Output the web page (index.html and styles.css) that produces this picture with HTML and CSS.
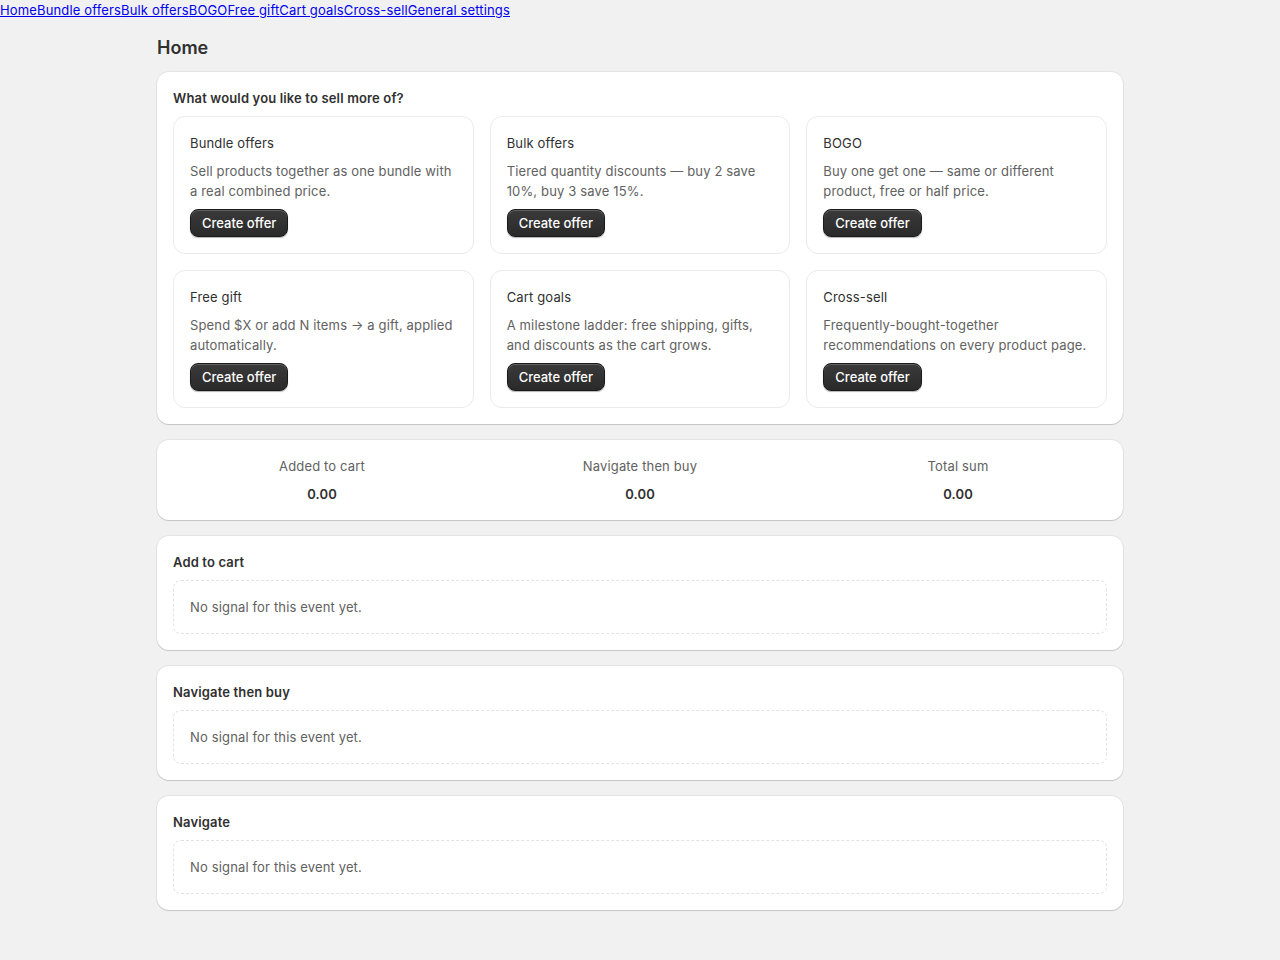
FILE: index.html
```html
<!DOCTYPE html>
<html>
<head>
<meta charset="utf-8">
<link rel="stylesheet" href="styles.css">
</head>
<body>
<nav class="topnav">
  <a href="#">Home</a><a href="#">Bundle offers</a><a href="#">Bulk offers</a><a href="#">BOGO</a><a href="#">Free gift</a><a href="#">Cart goals</a><a href="#">Cross-sell</a><a href="#">General settings</a>
</nav>
<main class="page">
  <h1 class="page-title">Home</h1>

  <section class="card">
    <h2 class="card-title">What would you like to sell more of?</h2>
    <div class="offer-grid">
      <div class="offer">
        <div class="offer-name">Bundle offers</div>
        <p class="offer-desc">Sell products together as one bundle with a real combined price.</p>
        <button class="btn">Create offer</button>
      </div>
      <div class="offer">
        <div class="offer-name">Bulk offers</div>
        <p class="offer-desc">Tiered quantity discounts — buy 2 save 10%, buy 3 save 15%.</p>
        <button class="btn">Create offer</button>
      </div>
      <div class="offer">
        <div class="offer-name">BOGO</div>
        <p class="offer-desc">Buy one get one — same or different product, free or half price.</p>
        <button class="btn">Create offer</button>
      </div>
      <div class="offer">
        <div class="offer-name">Free gift</div>
        <p class="offer-desc">Spend $X or add N items → a gift, applied automatically.</p>
        <button class="btn">Create offer</button>
      </div>
      <div class="offer">
        <div class="offer-name">Cart goals</div>
        <p class="offer-desc">A milestone ladder: free shipping, gifts, and discounts as the cart grows.</p>
        <button class="btn">Create offer</button>
      </div>
      <div class="offer">
        <div class="offer-name">Cross-sell</div>
        <p class="offer-desc">Frequently-bought-together recommendations on every product page.</p>
        <button class="btn">Create offer</button>
      </div>
    </div>
  </section>

  <section class="card stats">
    <div class="stat">
      <div class="stat-label">Added to cart</div>
      <div class="stat-value">0.00</div>
    </div>
    <div class="stat">
      <div class="stat-label">Navigate then buy</div>
      <div class="stat-value">0.00</div>
    </div>
    <div class="stat">
      <div class="stat-label">Total sum</div>
      <div class="stat-value">0.00</div>
    </div>
  </section>

  <section class="card">
    <h2 class="card-title">Add to cart</h2>
    <div class="empty">No signal for this event yet.</div>
  </section>

  <section class="card">
    <h2 class="card-title">Navigate then buy</h2>
    <div class="empty">No signal for this event yet.</div>
  </section>

  <section class="card">
    <h2 class="card-title">Navigate</h2>
    <div class="empty">No signal for this event yet.</div>
  </section>
</main>
</body>
</html>
```

FILE: styles.css
```css
* { box-sizing: border-box; }

body {
  margin: 0;
  background: #f1f1f1;
  font-family: Inter, "Noto Sans", sans-serif;
  font-size: 13px;
  letter-spacing: 0.15px;
  color: #303030;
}

.topnav {
  display: flex;
  font-size: 13px;
  line-height: 20px;
}

.topnav a {
  color: #0000ee;
  text-decoration: underline;
}

.page {
  width: 966px;
  margin: 0 auto;
  padding: 16px 0 48px;
  display: flex;
  flex-direction: column;
}

.page-title {
  margin: 0 0 12px;
  font-size: 18px;
  line-height: 24px;
  font-weight: 600;
  letter-spacing: 0;
  color: #303030;
}

.card {
  background: #fff;
  border-radius: 12px;
  box-shadow: 0 0 0 1px rgba(0, 0, 0, 0.05), 0 1px 1px rgba(0, 0, 0, 0.14);
  padding: 16px;
  margin-bottom: 16px;
  display: flex;
  flex-direction: column;
  gap: 8px;
}

.card-title {
  margin: 0;
  font-size: 13px;
  line-height: 20px;
  font-weight: 600;
  color: #303030;
}

.offer-grid {
  display: grid;
  grid-template-columns: repeat(3, 1fr);
  gap: 16px;
}

.offer {
  border: 1px solid #ebebeb;
  border-radius: 12px;
  padding: 16px;
  display: flex;
  flex-direction: column;
  align-items: flex-start;
}

.offer-name {
  line-height: 20px;
  color: #303030;
  margin-bottom: 8px;
}

.offer-desc {
  margin: 0 0 8px;
  line-height: 20px;
  color: #616161;
}

.btn {
  font-family: inherit;
  font-size: 13px;
  font-weight: 550;
  letter-spacing: 0;
  color: #fff;
  height: 28px;
  padding: 0 11px;
  border-radius: 8px;
  border: 1px solid #1a1a1a;
  background: linear-gradient(#3a3a3a, #2a2a2a);
  box-shadow: inset 0 1px 0 rgba(255, 255, 255, 0.2), 0 1px 1px rgba(0, 0, 0, 0.3);
  cursor: pointer;
}

.stats {
  flex-direction: row;
  gap: 20px;
  padding: 16px;
}

.stat {
  flex: 1;
  display: flex;
  flex-direction: column;
  align-items: center;
  gap: 8px;
}

.stat-label {
  line-height: 20px;
  color: #616161;
}

.stat-value {
  line-height: 20px;
  font-weight: 600;
  color: #303030;
}

.empty {
  border: 1px dashed #e3e3e3;
  border-radius: 8px;
  padding: 16px;
  line-height: 20px;
  color: #616161;
}
```
